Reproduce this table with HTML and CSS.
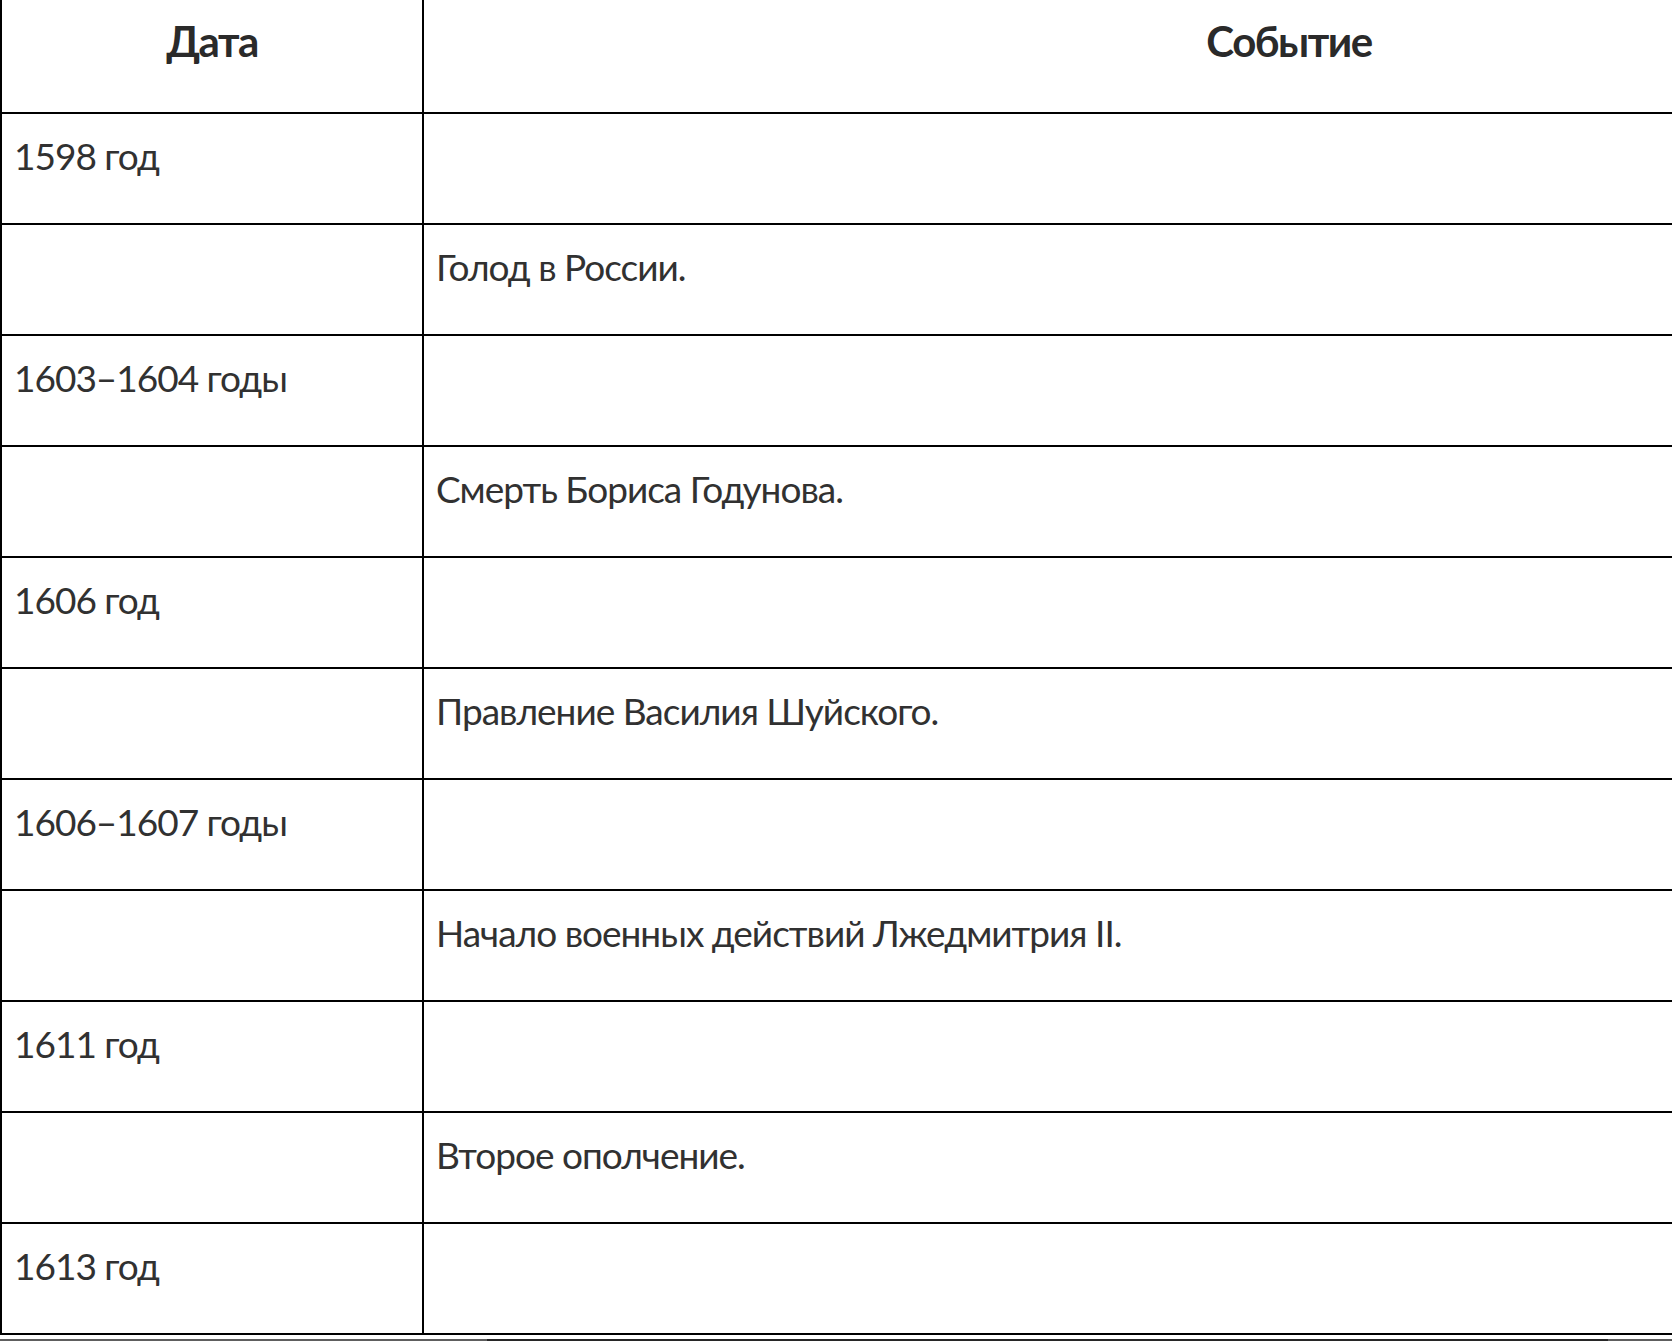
FILE: index.html
```html
<!DOCTYPE html>
<html lang="ru">
<head>
<meta charset="utf-8">
<title>Смутное время</title>
<link rel="stylesheet" href="styles.css">
</head>
<body>
<div class="viewport">
  <table class="timeline">
    <thead>
      <tr>
        <th><div class="cell head date">Дата</div></th>
        <th><div class="cell head event">Событие</div></th>
      </tr>
    </thead>
    <tbody>
      <tr><td><div class="cell date">1598 год</div></td><td><div class="cell event"></div></td></tr>
      <tr><td><div class="cell date"></div></td><td><div class="cell event">Голод в России.</div></td></tr>
      <tr><td><div class="cell date">1603–1604 годы</div></td><td><div class="cell event"></div></td></tr>
      <tr><td><div class="cell date"></div></td><td><div class="cell event">Смерть Бориса Годунова.</div></td></tr>
      <tr><td><div class="cell date">1606 год</div></td><td><div class="cell event"></div></td></tr>
      <tr><td><div class="cell date"></div></td><td><div class="cell event">Правление Василия Шуйского.</div></td></tr>
      <tr><td><div class="cell date">1606–1607 годы</div></td><td><div class="cell event"></div></td></tr>
      <tr><td><div class="cell date"></div></td><td><div class="cell event">Начало военных действий Лжедмитрия II.</div></td></tr>
      <tr><td><div class="cell date">1611 год</div></td><td><div class="cell event"></div></td></tr>
      <tr><td><div class="cell date"></div></td><td><div class="cell event">Второе ополчение.</div></td></tr>
      <tr><td><div class="cell date">1613 год</div></td><td><div class="cell event"></div></td></tr>
    </tbody>
  </table>
  <div class="hscroll"><div class="hscroll-thumb"></div></div>
</div>
</body>
</html>
```
FILE: styles.css
```css
html, body {
  margin: 0;
  padding: 0;
  background: #fff;
  overflow: hidden;
}

.viewport {
  width: 1672px;
  height: 1341px;
  overflow: hidden;
  display: flex;
  flex-direction: column;
  align-items: flex-start;
}

.timeline {
  border-collapse: separate;
  border-spacing: 0;
  flex: none;
  font-family: Lato, "Noto Sans", sans-serif;
  color: #313131;
}

.timeline th,
.timeline td {
  padding: 0;
  border-right: 2px solid #000;
  border-bottom: 2px solid #000;
  vertical-align: top;
  text-align: left;
}

.timeline th:first-child,
.timeline td:first-child {
  border-left: 2px solid #000;
}

.cell {
  box-sizing: border-box;
  height: 109px;
  padding: 20px 12px 0 12px;
  font-size: 37px;
  line-height: 44px;
  letter-spacing: -1px;
  white-space: nowrap;
}

.cell.date {
  width: 420px;
}

.cell.event {
  width: 1730px;
}

.cell.head {
  height: 112px;
  padding-top: 16px;
  font-size: 42px;
  line-height: 50px;
  font-weight: 700;
  letter-spacing: -1.5px;
  text-align: center;
  color: #2a2a2a;
}

.hscroll {
  flex: none;
  width: 1672px;
  height: 2px;
  margin-top: 4px;
  background: #5e5e5e;
  display: flex;
}

.hscroll-thumb {
  margin-left: 487px;
  width: 1121px;
  height: 2px;
  background: #272727;
}
```
